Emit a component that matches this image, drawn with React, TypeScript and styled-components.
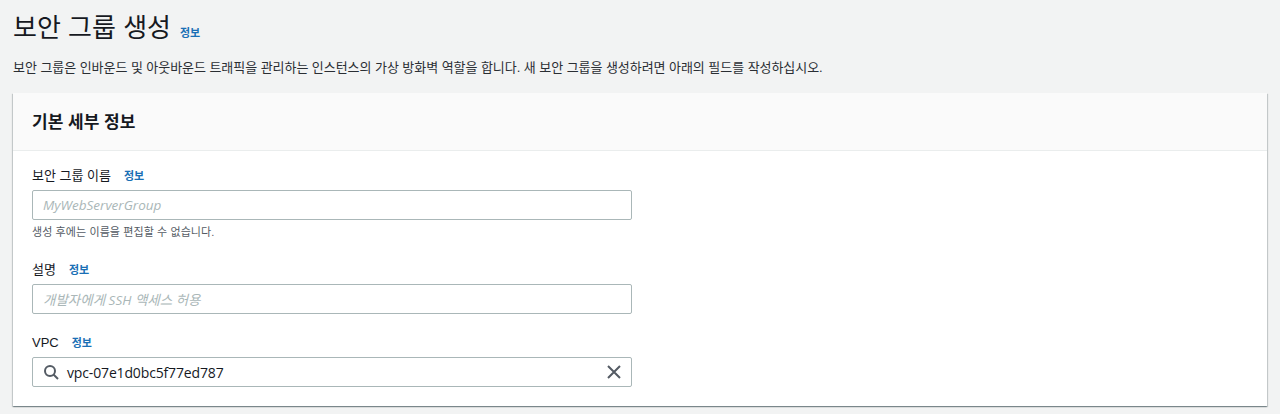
import React from 'react';
import styled, { createGlobalStyle } from 'styled-components';

const GlobalStyle = createGlobalStyle`
  html, body {
    margin: 0;
    padding: 0;
    height: 414px;
    overflow: hidden;
    background: #f2f3f3;
    font-family: "Liberation Sans", "Noto Sans CJK KR", sans-serif;
    color: #16191f;
  }
`;

const Page = styled.div`
  padding: 10px 13px 0 13px;
`;

const HeaderRow = styled.div`
  display: flex;
  align-items: flex-start;
  gap: 9px;
  height: 36px;
`;

const Title = styled.h1`
  margin: 0;
  font-size: 26px;
  font-weight: 400;
  line-height: 36px;
`;

const InfoLink = styled.a`
  font-size: 11px;
  line-height: 14px;
  font-weight: 700;
  color: #1a6fb5;
`;

const TitleInfoLink = styled(InfoLink)`
  margin-top: 16px;
`;

const Description = styled.p`
  margin: 12px 0 0;
  font-size: 13px;
  line-height: 20px;
  letter-spacing: -0.05px;
  color: #2a2e33;
`;

const Card = styled.section`
  margin-top: 15px;
  background: #fff;
  box-shadow: 0 1px 1px 0 rgba(0, 28, 36, 0.3), 1px 1px 1px 0 rgba(0, 28, 36, 0.15), -1px 1px 1px 0 rgba(0, 28, 36, 0.15);
`;

const CardHeader = styled.header`
  display: flex;
  align-items: center;
  height: 58px;
  padding: 0 19px 3px;
  box-sizing: border-box;
  background: #fafafa;
  border-bottom: 1px solid #eaeded;
`;

const CardTitle = styled.h2`
  margin: 0;
  font-size: 17px;
  font-weight: 700;
`;

const CardBody = styled.div`
  display: flex;
  flex-direction: column;
  gap: 20px;
  padding: 16px 19px 19px;
`;

const Field = styled.div`
  display: flex;
  flex-direction: column;
  width: 600px;
`;

const LabelRow = styled.div`
  display: flex;
  align-items: center;
  gap: 13px;
  height: 18px;
  margin-bottom: 5px;
`;

const Label = styled.label`
  font-size: 13px;
  line-height: 18px;
`;

const InputBox = styled.div`
  display: flex;
  align-items: center;
  height: 30px;
  box-sizing: border-box;
  padding: 0 10px;
  background: #fff;
  border: 1px solid #aab7b8;
  border-radius: 2px;
`;

const Placeholder = styled.span`
  font-family: "Open Sans", "Noto Sans CJK KR", sans-serif;
  font-size: 13.5px;
  font-style: italic;
  color: #aab7b8;
`;

const Value = styled.span`
  flex: 1;
  margin-left: 8px;
  font-family: "Open Sans", sans-serif;
  font-size: 14px;
  letter-spacing: -0.15px;
`;

const Hint = styled.div`
  margin: 5px 0 2px;
  font-size: 11px;
  line-height: 14px;
  letter-spacing: 0.1px;
  color: #545b64;
`;

const SearchIcon = () => (
  <svg width="16" height="16" viewBox="0 0 16 16" fill="none" stroke="#545b64" strokeWidth="2">
    <circle cx="7" cy="7" r="5" />
    <path d="M10.5 10.5 15 15" />
  </svg>
);

const ClearSvg = styled.svg`
  margin-right: -1px;
`;

const ClearIcon = () => (
  <ClearSvg width="16" height="16" viewBox="0 0 16 16" fill="none" stroke="#545b64" strokeWidth="2">
    <path d="M2 2l12 12M14 2 2 14" />
  </ClearSvg>
);

export default function App() {
  return (
    <>
      <GlobalStyle />
      <Page>
        <HeaderRow>
          <Title>보안 그룹 생성</Title>
          <TitleInfoLink>정보</TitleInfoLink>
        </HeaderRow>
        <Description>
          보안 그룹은 인바운드 및 아웃바운드 트래픽을 관리하는 인스턴스의 가상 방화벽 역할을 합니다. 새 보안 그룹을 생성하려면 아래의 필드를 작성하십시오.
        </Description>
        <Card>
          <CardHeader>
            <CardTitle>기본 세부 정보</CardTitle>
          </CardHeader>
          <CardBody>
            <Field>
              <LabelRow>
                <Label>보안 그룹 이름</Label>
                <InfoLink>정보</InfoLink>
              </LabelRow>
              <InputBox>
                <Placeholder>MyWebServerGroup</Placeholder>
              </InputBox>
              <Hint>생성 후에는 이름을 편집할 수 없습니다.</Hint>
            </Field>
            <Field>
              <LabelRow>
                <Label>설명</Label>
                <InfoLink>정보</InfoLink>
              </LabelRow>
              <InputBox>
                <Placeholder>개발자에게 SSH 액세스 허용</Placeholder>
              </InputBox>
            </Field>
            <Field>
              <LabelRow>
                <Label>VPC</Label>
                <InfoLink>정보</InfoLink>
              </LabelRow>
              <InputBox>
                <SearchIcon />
                <Value>vpc-07e1d0bc5f77ed787</Value>
                <ClearIcon />
              </InputBox>
            </Field>
          </CardBody>
        </Card>
      </Page>
    </>
  );
}
